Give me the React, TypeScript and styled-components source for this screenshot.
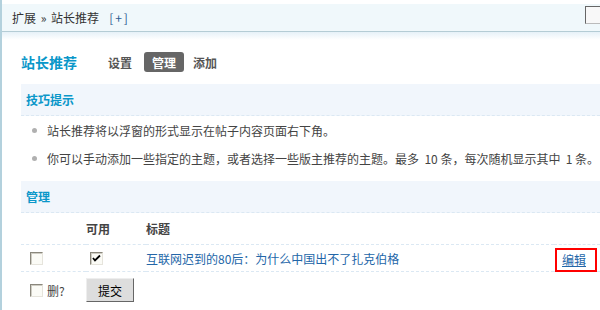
import React from "react";
import styled, { createGlobalStyle } from "styled-components";

const Global = createGlobalStyle`
  html, body { margin: 0; padding: 0; background: #fff; }
  body {
    font-family: "Noto Sans CJK SC", "Liberation Sans", sans-serif;
    font-size: 12px;
    color: #333;
  }
  * { box-sizing: border-box; }
`;

const Page = styled.div`
  width: 600px;
  height: 310px;
  overflow: hidden;
  padding-top: 4px;
  border-left: 2px solid #b3d1dd;
`;

const Header = styled.div`
  height: 28px;
  display: flex;
  align-items: center;
  justify-content: space-between;
  background: #f0f8fb;
  border-bottom: 1px solid #b4ccd5;
  padding-left: 10px;
  overflow: hidden;
`;

const Crumb = styled.div`
  color: #333;
  font-size: 12px;
  white-space: nowrap;
  word-spacing: 2px;
`;

const Plus = styled.span`
  color: #2b5a91;
  margin-left: 10px;
  letter-spacing: 2px;
`;

const SearchBox = styled.span`
  flex-shrink: 0;
  width: 40px;
  height: 18px;
  margin-right: -25px;
  margin-top: -5px;
  background: #f8f8f8;
  border-top: 1px solid #666;
  border-left: 1px solid #666;
  border-bottom: 1px solid #bbb;
  border-right: 1px solid #bbb;
`;

const Fade = styled.div`
  height: 8px;
  background: linear-gradient(#e6f1f8, #fff);
`;

const Content = styled.div`
  padding-left: 19px;
`;

const TitleRow = styled.div`
  display: flex;
  align-items: center;
  height: 26px;
  margin-top: 9px;
  margin-bottom: 9px;
`;

const Title = styled.h3`
  margin: 0;
  font-size: 14px;
  font-weight: bold;
  color: #0a97c9;
  width: 79px;
  white-space: nowrap;
`;

const Tab = styled.span<{ $active?: boolean }>`
  display: inline-flex;
  align-items: center;
  height: 20px;
  padding: 0 8px;
  margin-right: ${(p) => (p.$active ? "1px" : "4px")};
  border-radius: 3px;
  font-weight: bold;
  font-size: 12px;
  color: ${(p) => (p.$active ? "#fff" : "#555")};
  background: ${(p) => (p.$active ? "#666" : "transparent")};
`;

const SectionHead = styled.div`
  height: 32px;
  display: flex;
  align-items: center;
  padding-left: 5px;
  background: #f1f6fc;
  border-bottom: 1px dashed #dbe8f3;
  font-weight: bold;
  color: #0a97c9;
  font-size: 12px;
`;

const Tips = styled.ul`
  list-style: none;
  margin: 0 0 9px 0;
  padding: 0;
`;

const Tip = styled.li`
  height: 28px;
  display: flex;
  align-items: center;
  padding-left: 11px;
  color: #444;
  white-space: pre;
  &::before {
    content: "";
    width: 5px;
    height: 5px;
    border-radius: 50%;
    background: #b0b0b0;
    margin-right: 10px;
  }
`;

const Grid = styled.div`
  display: grid;
  grid-template-columns: 65px 60px 1fr 46px;
`;

const Cell = styled.div<{ $h: number; $line?: boolean; $bold?: boolean }>`
  height: ${(p) => p.$h}px;
  display: flex;
  align-items: center;
  border-bottom: ${(p) => (p.$line ? "1px dashed #dbe8f3" : "none")};
  font-weight: ${(p) => (p.$bold ? "bold" : "normal")};
  color: ${(p) => (p.$bold ? "#444" : "inherit")};
  white-space: nowrap;
`;

const FirstCell = styled(Cell)`
  padding-left: 9px;
`;

const CheckCell = styled(Cell)`
  padding-left: 4px;
`;

const Box = styled.span`
  display: inline-flex;
  align-items: center;
  justify-content: center;
  width: 13px;
  height: 13px;
  background: #fbfbf6;
  border-top: 1px solid #8a877c;
  border-left: 1px solid #8a877c;
  border-right: 1px solid #e6e4dc;
  border-bottom: 1px solid #e6e4dc;
  box-shadow: inset 1px 1px 0 #cfcdc4;
`;

const TopicLink = styled.a`
  color: #2366a8;
  text-decoration: none;
`;

const EditLink = styled.a`
  display: flex;
  align-items: center;
  width: 42px;
  height: 24px;
  margin-top: 3px;
  margin-left: 1px;
  padding-left: 5px;
  border: 2px solid #f00;
  color: #2366a8;
  text-decoration: underline;
`;

const DelLabel = styled.span`
  margin-left: 4px;
  color: #444;
`;

const Submit = styled.button`
  width: 48px;
  height: 24px;
  padding: 0;
  background: #ddd;
  border-top: 1px solid #eee;
  border-left: 1px solid #eee;
  border-right: 1px solid #666;
  border-bottom: 1px solid #666;
  font-family: "Noto Sans CJK SC", "Liberation Sans", sans-serif;
  font-size: 12px;
  color: #000;
`;

const Check = ({ checked }: { checked?: boolean }) => (
  <Box>
    {checked && (
      <svg width="9" height="9" viewBox="0 0 9 9">
        <path d="M1 4 L3 6.5 L8 1.5" stroke="#000" strokeWidth="1.8" fill="none" />
      </svg>
    )}
  </Box>
);

export default function App() {
  return (
    <>
      <Global />
      <Page>
        <Header>
          <Crumb>
            扩展 » 站长推荐<Plus>[+]</Plus>
          </Crumb>
          <SearchBox />
        </Header>
        <Fade />
        <Content>
          <TitleRow>
            <Title>站长推荐</Title>
            <Tab>设置</Tab>
            <Tab $active>管理</Tab>
            <Tab>添加</Tab>
          </TitleRow>
          <SectionHead>技巧提示</SectionHead>
          <Tips>
            <Tip>站长推荐将以浮窗的形式显示在帖子内容页面右下角。</Tip>
            <Tip>你可以手动添加一些指定的主题，或者选择一些版主推荐的主题。最多  10 条，每次随机显示其中  1 条。</Tip>
          </Tips>
          <SectionHead>管理</SectionHead>
          <Grid>
            <FirstCell $h={32} $line />
            <Cell $h={32} $line $bold>可用</Cell>
            <Cell $h={32} $line $bold>标题</Cell>
            <Cell $h={32} $line />

            <FirstCell $h={27} $line>
              <Check />
            </FirstCell>
            <CheckCell $h={27} $line>
              <Check checked />
            </CheckCell>
            <Cell $h={27} $line>
              <TopicLink href="#">互联网迟到的80后：为什么中国出不了扎克伯格</TopicLink>
            </Cell>
            <Cell $h={27} $line>
              <EditLink href="#">编辑</EditLink>
            </Cell>

            <FirstCell $h={36}>
              <Check />
              <DelLabel>删?</DelLabel>
            </FirstCell>
            <Cell $h={36}>
              <Submit>提交</Submit>
            </Cell>
            <Cell $h={36} />
            <Cell $h={36} />
          </Grid>
        </Content>
      </Page>
    </>
  );
}
